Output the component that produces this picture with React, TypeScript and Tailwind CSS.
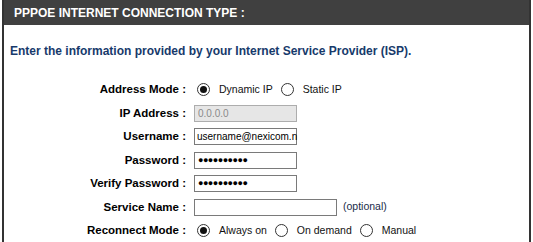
import React from 'react';

const font = { fontFamily: '"Liberation Sans", Arial, sans-serif' };

function Radio({ checked }: { checked?: boolean }) {
  return (
    <span className="w-[13px] h-[13px] rounded-full border border-[#333] bg-white flex items-center justify-center shrink-0">
      {checked && <span className="w-[7px] h-[7px] rounded-full bg-[#111]" />}
    </span>
  );
}

function Choice({ label, checked }: { label: string; checked?: boolean }) {
  return (
    <span className="flex items-center">
      <Radio checked={checked} />
      <span className="ml-[9px] mr-[8px] text-[10.5px] text-[#111]">{label}</span>
    </span>
  );
}

function Row({ label, children }: { label: string; children: React.ReactNode }) {
  return (
    <div className="flex items-center h-[23.5px]">
      <div className="w-[183px] text-right text-[11.5px] font-bold text-black pr-[1px]">{label}</div>
      <div className="ml-[7px] flex items-center">{children}</div>
    </div>
  );
}

export default function App() {
  return (
    <div className="w-[533px] h-[242px] bg-white overflow-hidden" style={font}>
      <div className="ml-[2px] w-[529px] h-full border-x-2 border-[#333]">
        <div className="h-[25px] bg-[#404040] flex items-center pl-[10px]">
          <span className="text-white font-bold text-[12px]">PPPOE INTERNET CONNECTION TYPE :</span>
        </div>
        <div className="pl-[6px] pt-[17px] text-[12px] font-bold text-[#173a6b]">
          Enter the information provided by your Internet Service Provider (ISP).
        </div>
        <div className="mt-[18px]">
          <Row label="Address Mode :">
            <span className="ml-[3px] flex items-center">
              <Choice label="Dynamic IP" checked />
              <Choice label="Static IP" />
            </span>
          </Row>
          <Row label="IP Address :">
            <div className="w-[103px] h-[17px] border border-[#adadad] bg-[#e6e6e6] text-[10px] text-[#8a8a8a] pl-[3px] leading-[15px]">0.0.0.0</div>
          </Row>
          <Row label="Username :">
            <div className="w-[103px] h-[17px] border border-[#7a7a7a] bg-white text-[10px] text-black pl-[2px] leading-[15px] whitespace-nowrap">username@nexicom.n</div>
          </Row>
          <Row label="Password :">
            <div className="w-[103px] h-[17px] border border-[#7a7a7a] bg-white text-[9px] text-black pl-[3px] leading-[15px] tracking-[-0.5px]">●●●●●●●●●●</div>
          </Row>
          <Row label="Verify Password :">
            <div className="w-[103px] h-[17px] border border-[#7a7a7a] bg-white text-[9px] text-black pl-[3px] leading-[15px] tracking-[-0.5px]">●●●●●●●●●●</div>
          </Row>
          <Row label="Service Name :">
            <div className="w-[143px] h-[17px] border border-[#7a7a7a] bg-white" />
            <span className="ml-[6px] text-[10.5px] text-[#1a2b4a]">(optional)</span>
          </Row>
          <Row label="Reconnect Mode :">
            <span className="ml-[3px] flex items-center">
              <Choice label="Always on" checked />
              <Choice label="On demand" />
              <Choice label="Manual" />
            </span>
          </Row>
        </div>
      </div>
    </div>
  );
}
